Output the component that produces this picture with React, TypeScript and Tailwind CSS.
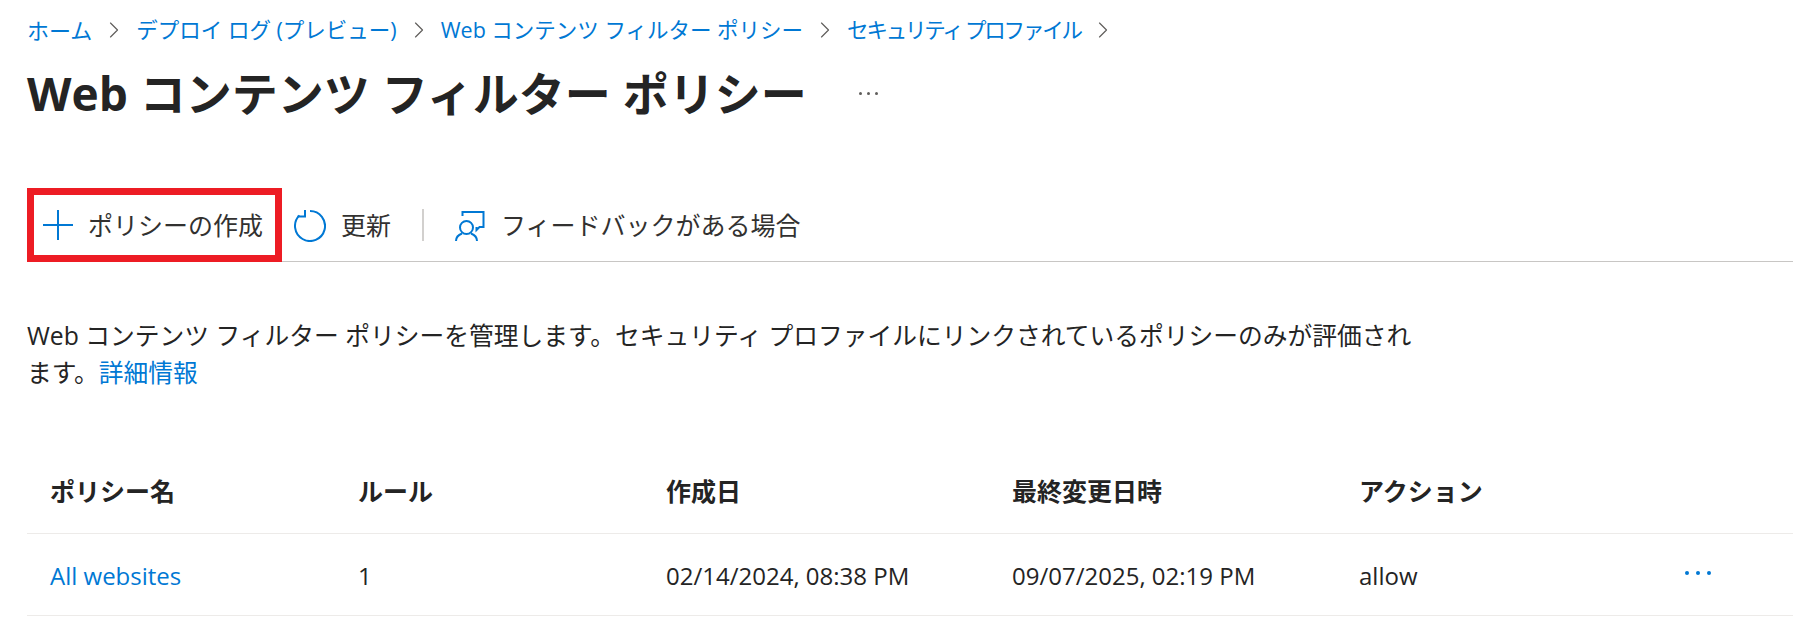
import { ChevronRight } from "lucide-react"

const font = { fontFamily: '"Open Sans", "Noto Sans CJK JP", sans-serif' }

const crumbs = [
  { label: "ホーム", cls: "text-[22px]" },
  { label: "デプロイ ログ (プレビュー)", cls: "text-[21.500px]" },
  { label: "Web コンテンツ フィルター ポリシー", cls: "text-[21.500px]" },
  { label: "セキュリティ プロファイル", cls: "text-[21.500px] tracking-[-2.200px]" },
]

function PlusIcon() {
  return (
    <svg width="32" height="32" viewBox="0 0 32 32" fill="none" stroke="#0078d4" strokeWidth="2">
      <path d="M16 1v30M1 16h30" />
    </svg>
  )
}

function RefreshIcon() {
  return (
    <svg width="32" height="32" viewBox="0 0 32 32" fill="none" stroke="#0078d4" strokeWidth="2">
      <path d="M16 1A15 15 0 1 1 5.400 5.400" />
      <path d="M11 0v6.500H3.500" />
    </svg>
  )
}

function FeedbackIcon() {
  return (
    <svg width="30" height="30" viewBox="0 0 30 30" fill="none" stroke="#0078d4" strokeWidth="2">
      <path d="M7.500 5V1h21v15h-4l-3 3v-3" />
      <circle cx="11.500" cy="16.500" r="6.500" />
      <path d="M1 30c0-4 2-6 6-7.500M16 22.500c4 1.500 6 3.500 6 7.500" />
    </svg>
  )
}

export default function App() {
  return (
    <div className="w-[1793px] h-[635px] overflow-hidden bg-white text-[#242424] pl-[27px]" style={font}>
      {/* Breadcrumb */}
      <div className="flex items-center gap-[8px] pt-[14px] h-[46px] text-[#0078d4]">
        {crumbs.map((c) => (
          <div key={c.label} className="flex items-center gap-[8px]">
            <span className={c.cls}>{c.label}</span>
            <ChevronRight size={28} strokeWidth={1} className="text-[#605e5c]" />
          </div>
        ))}
      </div>

      {/* Title */}
      <div className="flex items-center h-[68px] mt-[13px]">
        <h1 className="text-[46px] font-bold leading-none">Web コンテンツ フィルター ポリシー</h1>
        <div className="flex gap-[5px] ml-[52px] mt-[1px]">
          <span className="w-[3px] h-[3px] rounded-full bg-[#605e5c]" />
          <span className="w-[3px] h-[3px] rounded-full bg-[#605e5c]" />
          <span className="w-[3px] h-[3px] rounded-full bg-[#605e5c]" />
        </div>
      </div>

      {/* Toolbar */}
      <div className="flex items-center h-[74px] mt-[61px] border-b border-[#c8c6c4] text-[25px] text-[#323130]">
        <div className="flex items-center h-[74px] w-[255px] border-[7px] border-[#ed1c24] pl-[8px] gap-[14px] whitespace-nowrap">
          <PlusIcon />
          <span className="mt-[2px]">ポリシーの作成</span>
        </div>
        <div className="flex items-center gap-[15px] ml-[12px] mt-[2px]">
          <RefreshIcon />
          <span>更新</span>
        </div>
        <div className="w-[2px] h-[32px] bg-[#d2d0ce] ml-[31px]" />
        <div className="flex items-center gap-[16px] ml-[31px] mt-[2px]">
          <FeedbackIcon />
          <span>フィードバックがある場合</span>
        </div>
      </div>

      {/* Description */}
      <p className="w-[1400px] mt-[55px] text-[24.750px] leading-[37px]">
        Web コンテンツ フィルター ポリシーを管理します。セキュリティ プロファイルにリンクされているポリシーのみが評価されます。
        <span className="text-[#0078d4]">詳細情報</span>
      </p>

      {/* Table */}
      <div className="mt-[59px]">
        <div className="grid grid-cols-[308px_308px_346px_347px_1fr] items-center h-[84px] pl-[23px] border-b border-[#edebe9] text-[25px] font-bold">
          <span>ポリシー名</span>
          <span>ルール</span>
          <span>作成日</span>
          <span>最終変更日時</span>
          <span>アクション</span>
        </div>
        <div className="grid grid-cols-[308px_308px_346px_347px_1fr] items-center h-[82px] pt-[2px] pl-[23px] border-b border-[#edebe9] text-[24px]">
          <span className="text-[#0078d4]">All websites</span>
          <span>1</span>
          <span>02/14/2024, 08:38 PM</span>
          <span>09/07/2025, 02:19 PM</span>
          <div className="flex items-center justify-between">
            <span>allow</span>
            <div className="flex gap-[7px] mr-[82px] mb-[6px]">
              <span className="w-[4px] h-[4px] rounded-full bg-[#0078d4]" />
              <span className="w-[4px] h-[4px] rounded-full bg-[#0078d4]" />
              <span className="w-[4px] h-[4px] rounded-full bg-[#0078d4]" />
            </div>
          </div>
        </div>
      </div>
    </div>
  )
}
